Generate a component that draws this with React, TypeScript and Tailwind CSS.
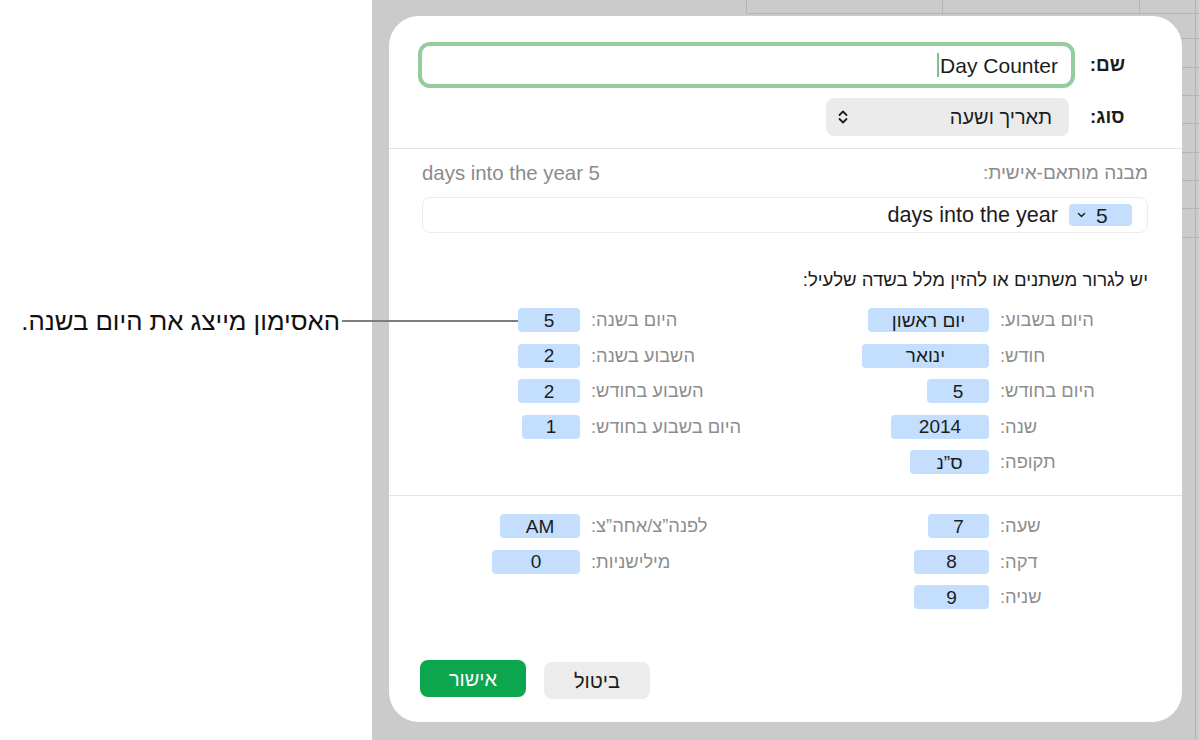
import React from "react";

type Item = { label: string; value: string; w: string };

function Token({ value, w }: { value: string; w: string }) {
  return (
    <div
      className={`h-6 rounded-[4px] bg-[#c4defe] flex items-center justify-center text-[19px] leading-none text-[#1c1c1c] ${w}`}
    >
      {value}
    </div>
  );
}

function Group({
  items,
  labelW,
  tokenW,
}: {
  items: Item[];
  labelW: string;
  tokenW: string;
}) {
  return (
    <div className="flex flex-col gap-[11.5px]">
      {items.map((it, i) => (
        <div key={i} className="flex h-6 items-center gap-[11px]">
          <span className={`text-left text-[18.3px] leading-6 text-[#8d8d8d] whitespace-nowrap ${labelW}`}>
            {it.label}
          </span>
          <div className={`flex justify-start ${tokenW}`}>
            <Token value={it.value} w={it.w} />
          </div>
        </div>
      ))}
    </div>
  );
}

function UpDown() {
  return (
    <svg width="12" height="18" viewBox="0 0 12 18" fill="none" stroke="#1f1f1f" strokeWidth="1.8" strokeLinecap="round" strokeLinejoin="round">
      <path d="M2.5 7 L6 3.5 L9.5 7" />
      <path d="M2.5 11 L6 14.5 L9.5 11" />
    </svg>
  );
}

function SmallChevron() {
  return (
    <svg width="9" height="6" viewBox="0 0 9 6" fill="none" stroke="#2a2a2a" strokeWidth="1.6" strokeLinecap="round" strokeLinejoin="round">
      <path d="M1.5 1.5 L4.5 4.5 L7.5 1.5" />
    </svg>
  );
}

function Grid() {
  const ys = [13, 38, 67, 95, 123, 152, 180, 208, 237];
  return (
    <svg className="absolute inset-0" width="827" height="740">
      {ys.map((y) => (
        <line key={y} x1="374" y1={y + 0.5} x2="827" y2={y + 0.5} stroke="#b4b4b4" strokeWidth="1" />
      ))}
      <line x1="374.5" y1="0" x2="374.5" y2="14" stroke="#b4b4b4" />
      <line x1="570.5" y1="0" x2="570.5" y2="14" stroke="#b4b4b4" />
      <line x1="767.5" y1="0" x2="767.5" y2="14" stroke="#b4b4b4" />
      <line x1="823.5" y1="0" x2="823.5" y2="740" stroke="#b4b4b4" />
    </svg>
  );
}

export default function App() {
  const dateRight: Item[] = [
    { label: "היום בשבוע:", value: "יום ראשון", w: "w-[121px]" },
    { label: "חודש:", value: "ינואר", w: "w-[127px]" },
    { label: "היום בחודש:", value: "5", w: "w-[62px]" },
    { label: "שנה:", value: "2014", w: "w-[98px]" },
    { label: "תקופה:", value: "ס”נ", w: "w-[79px]" },
  ];
  const dateLeft: Item[] = [
    { label: "היום בשנה:", value: "5", w: "w-[62px]" },
    { label: "השבוע בשנה:", value: "2", w: "w-[62px]" },
    { label: "השבוע בחודש:", value: "2", w: "w-[62px]" },
    { label: "היום בשבוע בחודש:", value: "1", w: "w-[58px]" },
  ];
  const timeRight: Item[] = [
    { label: "שעה:", value: "7", w: "w-[61px]" },
    { label: "דקה:", value: "8", w: "w-[75px]" },
    { label: "שניה:", value: "9", w: "w-[75px]" },
  ];
  const timeLeft: Item[] = [
    { label: "לפנה”צ/אחה”צ:", value: "AM", w: "w-[80px]" },
    { label: "מילישניות:", value: "0", w: "w-[88px]" },
  ];

  return (
    <div className="w-[1199px] h-[740px] flex overflow-hidden relative font-['Liberation_Sans',Arial,sans-serif] text-[#1c1c1c]">
      {/* callout side */}
      <div className="w-[372px] shrink-0 bg-white pt-[305px] pr-[32px]" dir="rtl">
        <p className="text-[25.7px] leading-[32px] text-right text-[#111]">האסימון מייצג את היום בשנה.</p>
      </div>

      {/* spreadsheet backdrop */}
      <div className="flex-1 h-[740px] bg-[#cbcbcb] relative">
        <Grid />
        <div
          dir="rtl"
          className="relative mt-4 ml-[17px] w-[793px] h-[706px] bg-white rounded-[30px] flex flex-col"
        >
          {/* name + type */}
          <div className="pt-[26px] pb-[12px]">
            <div className="flex items-center pr-[57px] pl-[29px] gap-[15px]">
              <span className="w-[35px] text-left text-[19px] font-bold leading-6">שם:</span>
              <div className="flex-1 h-[46px] border-4 border-[#93cc9e] rounded-[12px] flex items-center pr-[13px] gap-[1px]">
                <span dir="ltr" className="text-[21px] leading-none text-[#1c1c1c]">Day Counter</span>
                <span className="w-[2px] h-[24px] bg-[#7cc48b]" />
              </div>
            </div>
            <div className="mt-[10px] flex items-center pr-[57px] gap-[21px]">
              <span className="w-[35px] text-left text-[19px] font-bold leading-6">סוג:</span>
              <div className="w-[243px] h-[38px] rounded-[8px] bg-[#ebebeb] flex items-center justify-between pr-[17px] pl-[11px]">
                <span className="text-[20px] leading-none">תאריך ושעה</span>
                <UpDown />
              </div>
            </div>
          </div>
          <div className="h-px bg-[#e4e4e4]" />

          {/* custom format */}
          <div className="pr-[34px] pl-[33px] pt-[12px]">
            <div className="flex justify-between items-center h-6 text-[19px] text-[#8b8b8b]">
              <span>מבנה מותאם-אישית:</span>
              <span dir="ltr" className="text-[20.4px]">days into the year 5</span>
            </div>
            <div className="mt-[12px] h-[36px] border border-[#ececec] rounded-[8px] flex items-center pr-[15px] gap-[11px]">
              <div dir="ltr" className="w-[63px] h-[22px] rounded-[4px] bg-[#c4defe] flex items-center pl-[8px]">
                <SmallChevron />
                <span className="ml-[10px] text-[21px] leading-none">5</span>
              </div>
              <span dir="ltr" className="text-[21.6px] leading-none">days into the year</span>
            </div>
            <p className="mt-[35px] text-[18.6px] leading-6 text-[#1c1c1c]">
              יש לגרור משתנים או להזין מלל בשדה שלעיל:
            </p>
          </div>

          {/* date tokens */}
          <div className="mt-[16px] flex items-start pr-[82px] gap-[105px]">
            <Group items={dateRight} labelW="w-[100px]" tokenW="w-[139px]" />
            <Group items={dateLeft} labelW="w-[154px]" tokenW="w-[100px]" />
          </div>

          <div className="mt-[21px] h-px bg-[#e4e4e4]" />

          {/* time tokens */}
          <div className="mt-[18px] flex items-start pr-[82px] gap-[105px]">
            <Group items={timeRight} labelW="w-[100px]" tokenW="w-[139px]" />
            <Group items={timeLeft} labelW="w-[154px]" tokenW="w-[100px]" />
          </div>

          {/* buttons */}
          <div className="mt-auto flex justify-end items-start gap-[18px] pl-[31px] pb-[23px]">
            <button className="mt-[2px] w-[106px] h-[37px] rounded-[8px] bg-[#ececec] text-[20px] text-[#1c1c1c]">ביטול</button>
            <button className="w-[106px] h-[37px] rounded-[8px] bg-[#0ca64f] text-[20px] text-white">אישור</button>
          </div>
        </div>
      </div>

      {/* callout leader line */}
      <div className="absolute top-[320px] left-[342px] w-[176px] h-[2px] bg-[#7d7d7d]" />
    </div>
  );
}
